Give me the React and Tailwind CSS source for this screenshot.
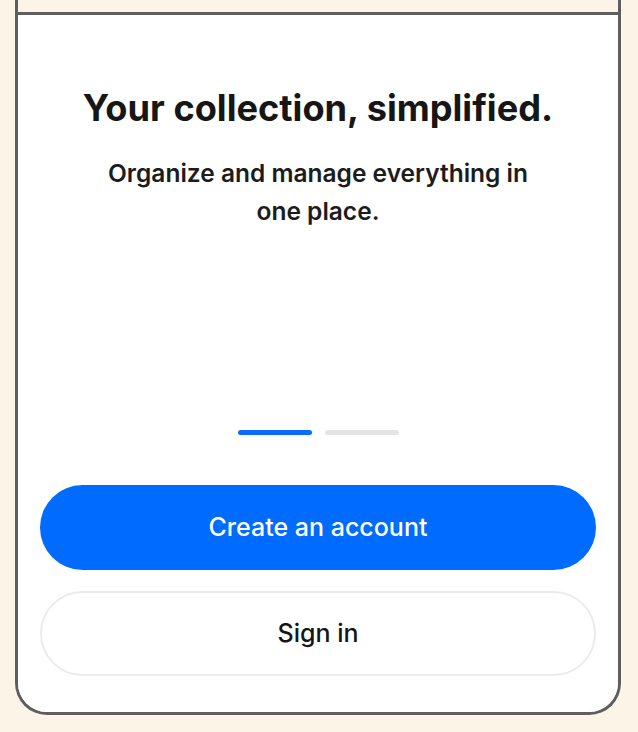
import React from "react";

const App = () => {
    return (
        <div className="min-h-[732px] bg-[#fdf4e8] px-[15px] pb-[17px] font-['Inter',sans-serif]">
            <div className="w-[606px] border-x-[3px] border-b-[3px] border-[#5e5e5e] rounded-b-[32px] overflow-hidden">
                {/* top strip */}
                <div className="h-[12px] bg-[#fdf4e8]"></div>

                <div className="border-t-[3px] border-[#5e5e5e] bg-white px-[22px] pt-[71px] pb-[36px]">
                    <h1 className="text-center text-[36.2px] leading-[44px] font-bold text-[#161616]">
                        Your collection, simplified.
                    </h1>
                    <p className="mx-auto mt-[24px] w-[450px] text-center text-[24.5px] leading-[38px] font-semibold text-[#1c1c1c]">
                        Organize and manage everything in one place.
                    </p>

                    {/* pager */}
                    <div className="mt-[200px] flex justify-center gap-[13px]">
                        <div className="h-[5px] w-[74px] rounded-full bg-[#0a6cff]"></div>
                        <div className="h-[5px] w-[74px] rounded-full bg-[#e4e4e4]"></div>
                    </div>

                    <div className="mt-[50px] flex flex-col gap-[21px]">
                        <button className="h-[85px] w-full rounded-full bg-[#006bff] text-[25px] font-medium text-white">
                            Create an account
                        </button>
                        <button className="h-[85px] w-full rounded-full border-2 border-[#ebebeb] bg-white text-[25px] font-medium text-[#161616]">
                            Sign in
                        </button>
                    </div>
                </div>
            </div>
        </div>
    );
};

export default App;
